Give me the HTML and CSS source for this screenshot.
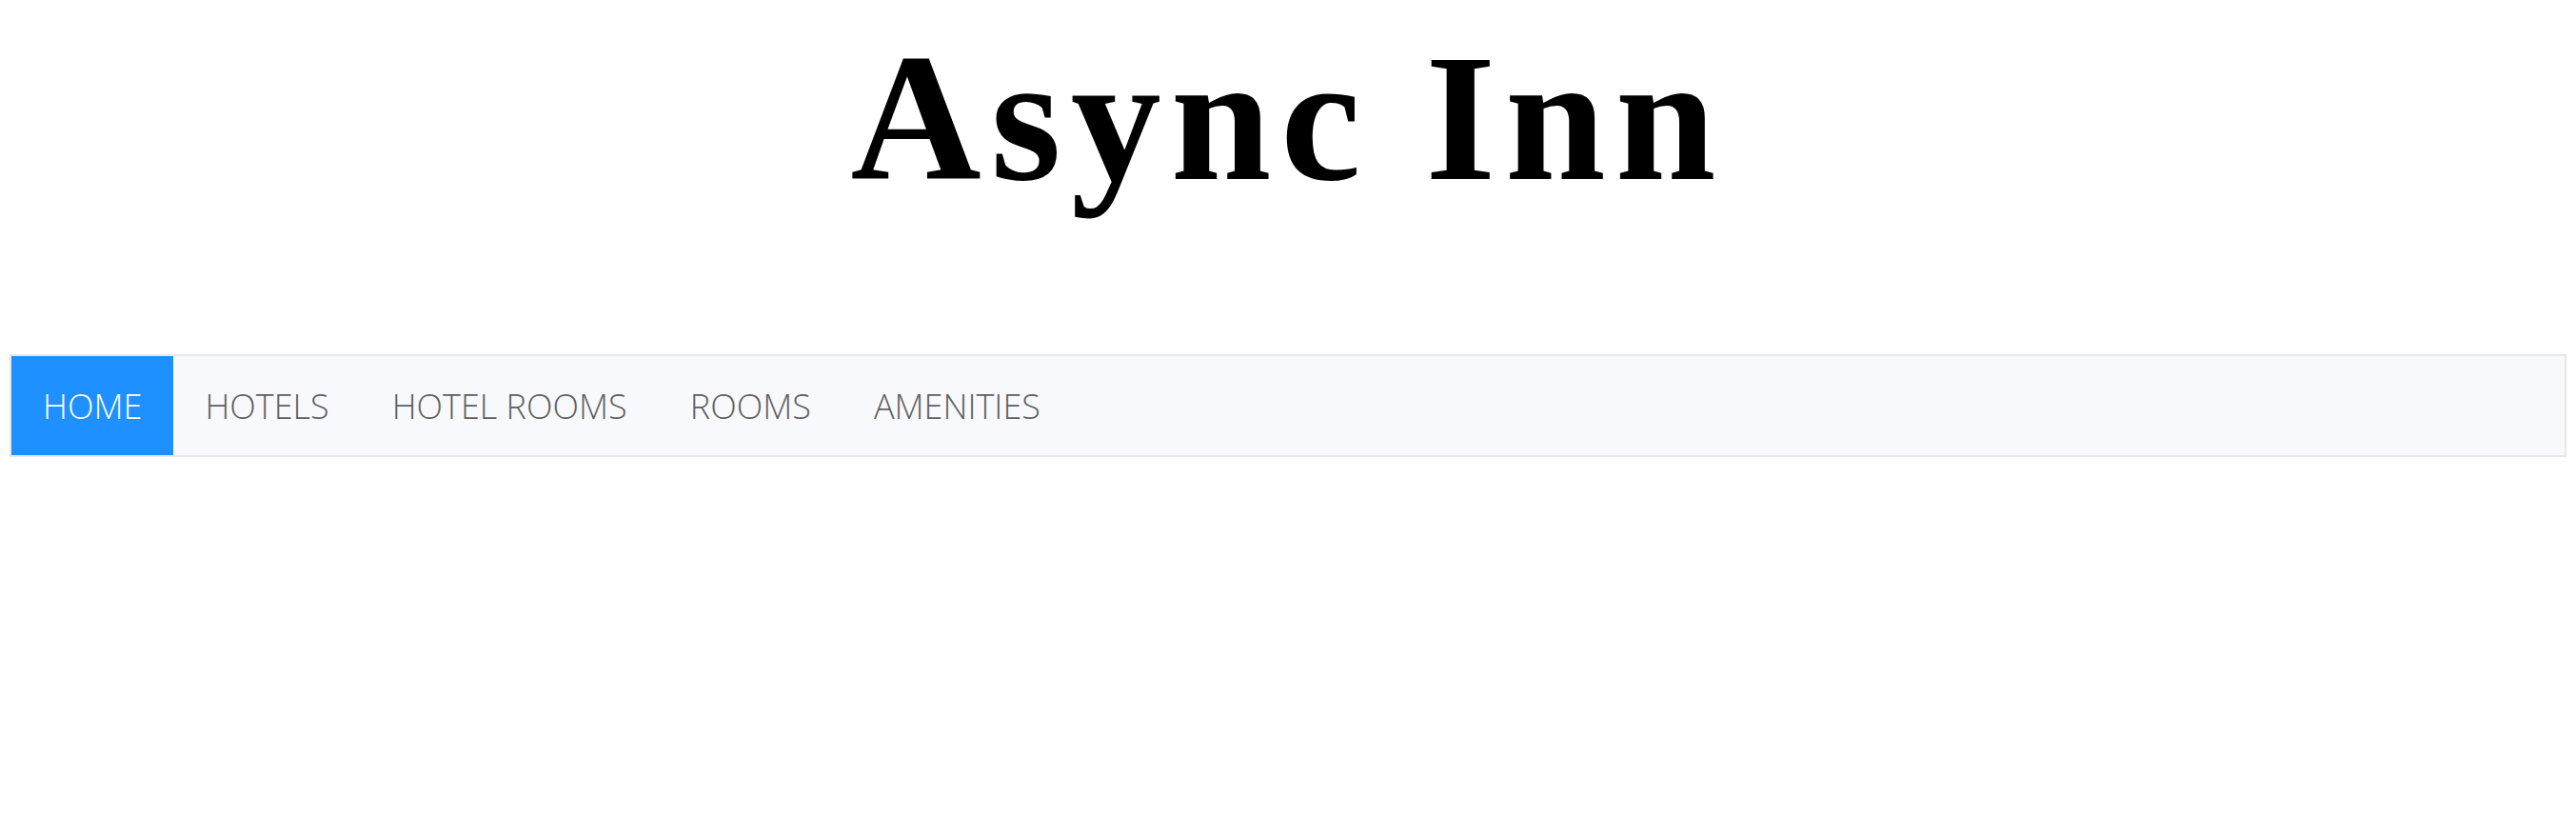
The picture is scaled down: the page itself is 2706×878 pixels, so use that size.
FILE: index.html
```html
<!DOCTYPE html>
<html lang="en">
<head>
<meta charset="utf-8">
<title>Async Inn</title>
<link rel="stylesheet" href="styles.css">
</head>
<body>
<header class="site-header">
  <h1 class="site-title">Async Inn</h1>
</header>
<nav class="main-nav">
  <a class="nav-link active" href="#">HOME</a>
  <a class="nav-link" href="#">HOTELS</a>
  <a class="nav-link" href="#">HOTEL ROOMS</a>
  <a class="nav-link" href="#">ROOMS</a>
  <a class="nav-link" href="#">AMENITIES</a>
</nav>
</body>
</html>
```

FILE: styles.css
```css
html, body {
  margin: 0;
  padding: 0;
  background: #ffffff;
}

body {
  padding: 8px;
}

.site-header {
  text-align: center;
  padding-top: 21px;
  padding-bottom: 153px;
}

.site-title {
  margin: 0;
  font-family: "Liberation Serif", "Times New Roman", serif;
  font-weight: bold;
  font-size: 190px;
  line-height: 190px;
  letter-spacing: 10px;
  color: #000000;
}

.main-nav {
  display: flex;
  margin: 0 2px;
  border: 2px solid #e7e7e7;
  background: #f8f9fd;
}

.nav-link {
  display: flex;
  align-items: center;
  height: 104px;
  padding: 0 33px;
  font-family: "Open Sans", "Noto Sans", sans-serif;
  font-weight: 300;
  font-size: 36px;
  color: #5f5f5f;
  text-decoration: none;
}

.nav-link.active {
  background: #1e90ff;
  color: #ffffff;
}
```
